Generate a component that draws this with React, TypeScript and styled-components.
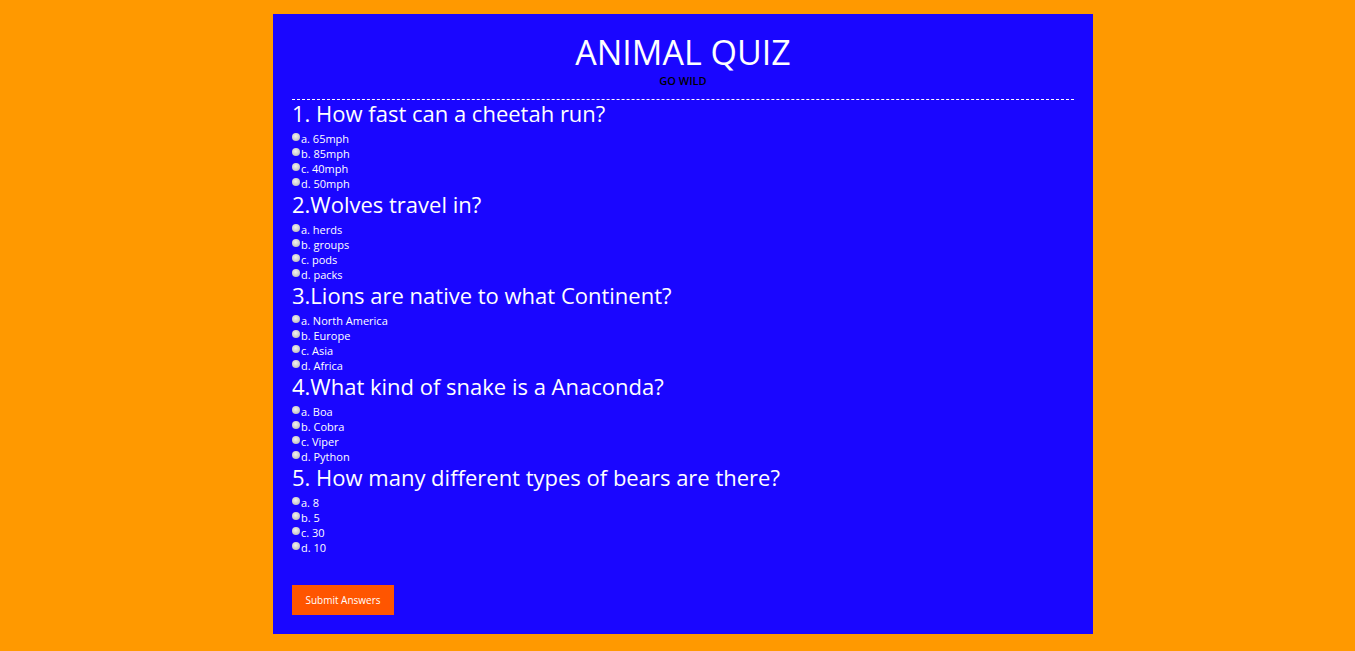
import React from "react";
import styled, { createGlobalStyle } from "styled-components";

const Global = createGlobalStyle`
  html, body {
    margin: 0;
    padding: 0;
    background: #ff9900;
  }
  body {
    font-family: "Comic Sans MS", "Open Sans", sans-serif;
    color: #ffffff;
  }
`;

const Page = styled.div`
  padding: 14px 0 17px 273px;
`;

const Card = styled.form`
  box-sizing: border-box;
  width: 820px;
  padding: 19px;
  background: #1a06ff;
  display: flex;
  flex-direction: column;
`;

const Header = styled.header`
  display: flex;
  flex-direction: column;
  align-items: center;
  padding-bottom: 11px;
  border-bottom: 1px dashed #ffffff;
`;

const Title = styled.h1`
  margin: 0;
  font-size: 34px;
  line-height: 38px;
  font-weight: normal;
  color: #ffffff;
`;

const Subtitle = styled.p`
  margin: 3px 0 0;
  font-size: 11px;
  line-height: 14px;
  font-weight: 600;
  color: #000000;
`;

const Question = styled.fieldset`
  border: 0;
  margin: 0;
  padding: 0;
  display: flex;
  flex-direction: column;
`;

const QuestionTitle = styled.legend`
  padding: 0;
  margin: 0 0 5px;
  font-size: 22px;
  line-height: 26px;
  float: left;
  width: 100%;
`;

const Options = styled.div`
  display: flex;
  flex-direction: column;
  clear: both;
`;

const Option = styled.label`
  display: flex;
  align-items: center;
  height: 15px;
  font-size: 11px;
  line-height: 15px;
  color: #ffffff;
`;

const Radio = styled.input`
  appearance: none;
  -webkit-appearance: none;
  width: 8px;
  height: 8px;
  margin: -3px 1px 0 0;
  border-radius: 50%;
  background: radial-gradient(circle at 45% 40%, #f2f2f2 0%, #cfcfcf 55%, #a9a9a9 100%);
  flex: none;
`;

const SubmitButton = styled.button`
  align-self: flex-start;
  margin-top: 30px;
  width: 102px;
  height: 30px;
  border: 0;
  padding: 0;
  background: #ff5500;
  color: #ffffff;
  font-family: inherit;
  font-size: 10px;
`;

const questions = [
  { title: "1. How fast can a cheetah run?", options: ["a. 65mph", "b. 85mph", "c. 40mph", "d. 50mph"] },
  { title: "2.Wolves travel in?", options: ["a. herds", "b. groups", "c. pods", "d. packs"] },
  { title: "3.Lions are native to what Continent?", options: ["a. North America", "b. Europe", "c. Asia", "d. Africa"] },
  { title: "4.What kind of snake is a Anaconda?", options: ["a. Boa", "b. Cobra", "c. Viper", "d. Python"] },
  { title: "5. How many different types of bears are there?", options: ["a. 8", "b. 5", "c. 30", "d. 10"] },
];

export default function App() {
  return (
    <>
      <Global />
      <Page>
        <Card onSubmit={(e) => e.preventDefault()}>
          <Header>
            <Title>ANIMAL QUIZ</Title>
            <Subtitle>GO WILD</Subtitle>
          </Header>
          {questions.map((q, qi) => (
            <Question key={qi}>
              <QuestionTitle>{q.title}</QuestionTitle>
              <Options>
                {q.options.map((o, oi) => (
                  <Option key={oi}>
                    <Radio type="radio" name={`q${qi}`} />
                    {o}
                  </Option>
                ))}
              </Options>
            </Question>
          ))}
          <SubmitButton type="submit">Submit Answers</SubmitButton>
        </Card>
      </Page>
    </>
  );
}
